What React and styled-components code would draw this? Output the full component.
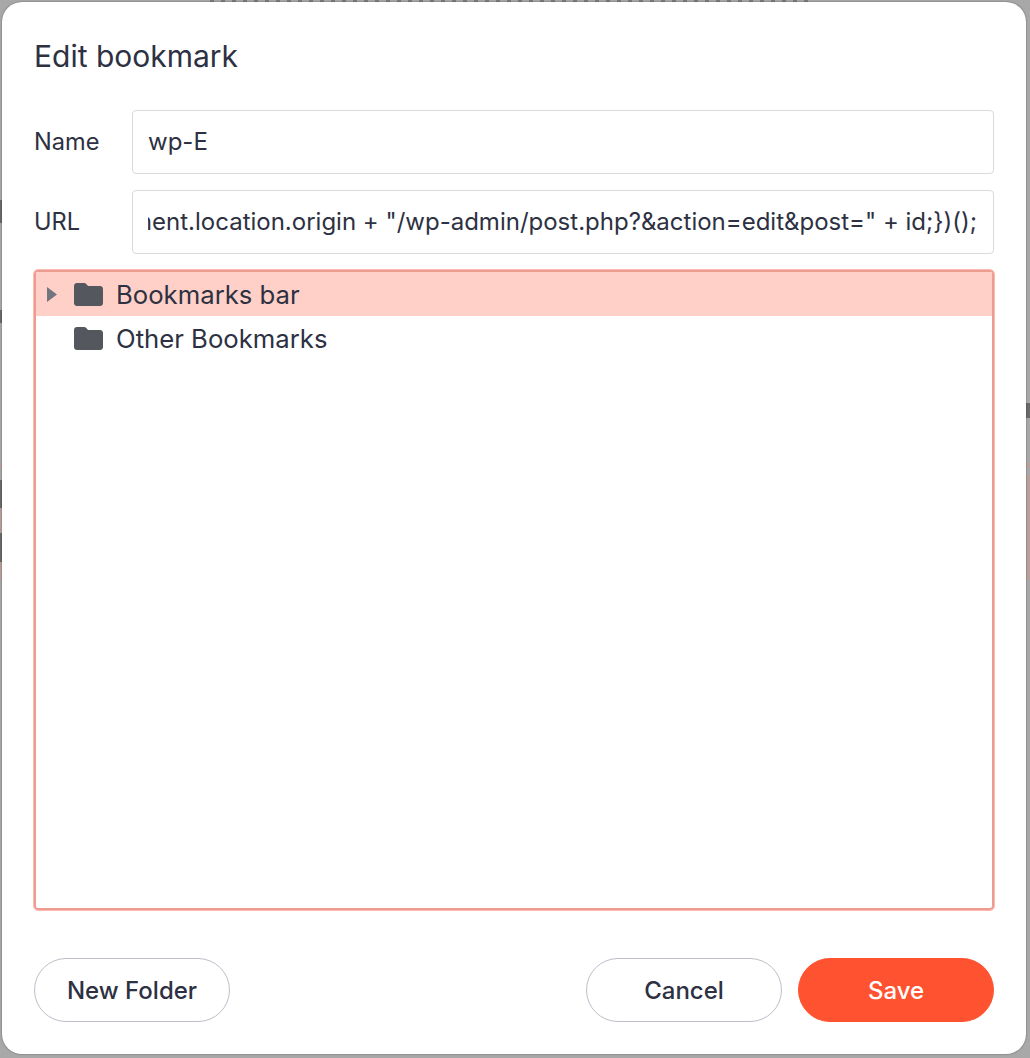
import React from 'react';
import styled, { createGlobalStyle } from 'styled-components';

const urlValue = 'document.location.origin + "/wp-admin/post.php?&action=edit&post=" + id;})();';

const GlobalStyle = createGlobalStyle`
  html, body {
    margin: 0;
    padding: 0;
    height: 100%;
    background: #a8a8a8;
    overflow: hidden;
  }
  * {
    box-sizing: border-box;
  }
`;

// the dimmed page behind the dialog only shows as thin slivers along the edges
const Backdrop = styled.div`
  width: 1030px;
  height: 1058px;
  padding: 2px 4px 4px 2px;
  background-color: #a8a8a8;
  background-repeat: no-repeat;
  background-image:
    repeating-linear-gradient(90deg, #7c7c7c 0 4px, transparent 4px 11px),
    linear-gradient(180deg,
      transparent 200px, #6a6a6a 200px 223px, transparent 223px 310px,
      #6a6a6a 310px 323px, transparent 323px 463px, #b8a09c 463px 468px,
      transparent 468px 480px, #6a6a6a 480px 508px, #b8a09c 508px 533px,
      #6a6a6a 533px 562px, #b8a09c 562px 580px, transparent 580px),
    linear-gradient(180deg,
      transparent 403px, #6a6a6a 403px 418px, transparent 418px 463px,
      #b8a09c 463px 468px, transparent 468px 475px, #b8a09c 475px 580px,
      transparent 580px);
  background-size: 600px 2px, 2px 100%, 4px 100%;
  background-position: 210px 0, 0 0, 1026px 0;
  font-family: Inter, "Liberation Sans", sans-serif;
  color: #2d3142;
`;

const Modal = styled.div`
  height: 100%;
  display: flex;
  flex-direction: column;
  padding: 0 32px 32px;
  background: #fff;
  border-radius: 20px;
  box-shadow: 0 0 2px rgba(0, 0, 0, 0.45);
`;

const Title = styled.h2`
  margin: 0;
  padding-top: 36px;
  height: 108px;
  font-size: 30px;
  line-height: 36px;
  font-weight: 400;
`;

const Row = styled.div`
  display: flex;
  align-items: center;
  height: 64px;
  margin-bottom: 16px;
`;

const Label = styled.label`
  width: 98px;
  padding-bottom: 2px;
  font-size: 23.6px;
`;

const Field = styled.div`
  flex: 1;
  min-width: 0;
  height: 64px;
  display: flex;
  align-items: center;
  padding: 0 16px 2px 15px;
  border: 1px solid #dadada;
  border-radius: 4px;
  font-size: 24px;
`;

const FieldText = styled.div`
  flex: 1;
  min-width: 0;
  display: flex;
  justify-content: ${p => (p.$end ? 'flex-end' : 'flex-start')};
  white-space: nowrap;
  overflow: hidden;
`;

const Tree = styled.div`
  flex: 1;
  margin-bottom: 48px;
  border: 2px solid #ed9c91;
  outline: 1px solid #fdb9ae;
  border-radius: 4px;
  overflow: hidden;
`;

const TreeRow = styled.div`
  height: 44px;
  display: flex;
  align-items: center;
  padding-left: 11px;
  background: ${p => (p.$selected ? '#ffd0c7' : 'transparent')};
`;

const TreeLabel = styled.span`
  margin-top: 2px;
  font-size: 25.7px;
  line-height: 32px;
`;

const Caret = styled.svg`
  width: 10px;
  height: 15px;
  margin-right: 17px;
  flex: none;
  visibility: ${p => (p.$hidden ? 'hidden' : 'visible')};
`;

const FolderIcon = styled.svg`
  width: 29px;
  height: 23px;
  margin-right: 13px;
  flex: none;
`;

const Footer = styled.div`
  display: flex;
  align-items: center;
  gap: 16px;
`;

const Spacer = styled.div`
  flex: 1;
`;

const Button = styled.button`
  width: 196px;
  height: 64px;
  padding: 0;
  border-radius: 32px;
  border: 1px solid ${p => (p.$primary ? '#ff5230' : '#bebecb')};
  background: ${p => (p.$primary ? '#ff5230' : '#fff')};
  color: ${p => (p.$primary ? '#fff' : '#2d3142')};
  font-family: inherit;
  font-size: 24px;
  font-weight: 500;
`;

const Folder = () => (
  <FolderIcon viewBox="0 0 29 23" aria-hidden="true">
    <path
      fill="#54585e"
      d="M3 0h7c1 0 1.7.4 2.3 1.1L14 3h12c1.7 0 3 1.3 3 3v14c0 1.7-1.3 3-3 3H3c-1.7 0-3-1.3-3-3V3c0-1.7 1.3-3 3-3z"
    />
  </FolderIcon>
);

const BookmarkRow = ({ name, selected, expandable }) => (
  <TreeRow $selected={selected}>
    <Caret viewBox="0 0 10 15" $hidden={!expandable} aria-hidden="true">
      <path fill="#71757f" d="M0 0l10 7.5L0 15z" />
    </Caret>
    <Folder />
    <TreeLabel>{name}</TreeLabel>
  </TreeRow>
);

const App = () => {
  return (
    <Backdrop>
      <GlobalStyle />
      <Modal>
        <Title>Edit bookmark</Title>
        <Row>
          <Label>Name</Label>
          <Field>
            <FieldText>wp-E</FieldText>
          </Field>
        </Row>
        <Row>
          <Label>URL</Label>
          <Field>
            <FieldText $end>{urlValue}</FieldText>
          </Field>
        </Row>
        <Tree>
          <BookmarkRow name="Bookmarks bar" selected expandable />
          <BookmarkRow name="Other Bookmarks" />
        </Tree>
        <Footer>
          <Button>New Folder</Button>
          <Spacer />
          <Button>Cancel</Button>
          <Button $primary>Save</Button>
        </Footer>
      </Modal>
    </Backdrop>
  );
};

export default App;
